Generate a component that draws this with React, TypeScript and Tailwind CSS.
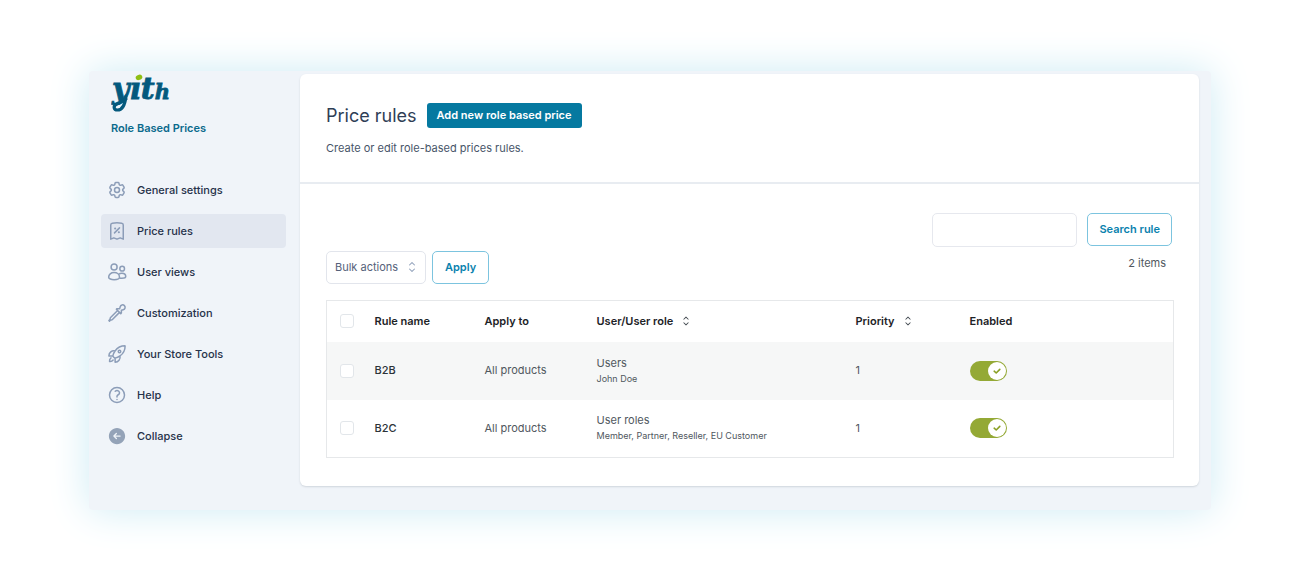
import type { ReactNode } from 'react'
import clsx from 'clsx'
import {
  HiArrowLeftCircle,
  HiChevronUpDown,
  HiOutlineCog6Tooth,
  HiOutlineEyeDropper,
  HiOutlineQuestionMarkCircle,
  HiOutlineReceiptPercent,
  HiOutlineRocketLaunch,
} from 'react-icons/hi2'

function UsersIcon({ className }: { className?: string }) {
  return (
    <svg viewBox="0 0 24 24" fill="none" stroke="currentColor" strokeLinejoin="round" className={className}>
      <circle cx="8.5" cy="6" r="3.6" />
      <circle cx="18.2" cy="8" r="2.8" />
      <path d="M2 18.400c0-3.500 2.800-5.700 6.500-5.700s6.500 2.200 6.500 5.700c0 1.800-3.200 2.800-6.500 2.800s-6.500-1-6.500-2.800Z" />
      <path d="M14.200 14.700c.9-.8 2.300-1.200 3.700-1.200 2.700 0 4.600 1.600 4.600 3.900 0 1.400-2 2.100-4.600 2.100-1.100 0-2.200-.1-3.100-.4" />
    </svg>
  )
}

const navItems = [
  { label: 'General settings', icon: HiOutlineCog6Tooth },
  { label: 'Price rules', icon: HiOutlineReceiptPercent, active: true },
  { label: 'User views', icon: UsersIcon },
  { label: 'Customization', icon: HiOutlineEyeDropper },
  { label: 'Your Store Tools', icon: HiOutlineRocketLaunch },
  { label: 'Help', icon: HiOutlineQuestionMarkCircle },
]

const rules = [
  { name: 'B2B', applyTo: 'All products', target: 'Users', detail: 'John Doe', priority: 1 },
  {
    name: 'B2C',
    applyTo: 'All products',
    target: 'User roles',
    detail: 'Member, Partner, Reseller, EU Customer',
    priority: 1,
  },
]

function Logo() {
  return (
    <svg
      width="70"
      height="48"
      viewBox="0 -8 70 48"
      role="img"
      aria-label="yith"
      fill="#04597d"
      className="-mt-2"
    >
      <text
        x="1"
        y="25"
        fontFamily="DejaVu Serif, serif"
        fontWeight="700"
        fontStyle="italic"
        fontSize="30"
        stroke="#04597d"
        strokeWidth="0.8"
      >
        yıt
        <tspan fontSize="21">h</tspan>
      </text>
      {/* looped tail under the first letter */}
      <path
        d="M15 22C14 31 11 36 6.500 36C2.500 36 2 32 5.500 30C8 28.600 11 28 15 25"
        fill="none"
        stroke="#04597d"
        strokeWidth="3.200"
        strokeLinecap="round"
      />
      <ellipse cx="28" cy="3.400" rx="3.400" ry="2.600" transform="rotate(-20 28 3.400)" fill="#8fbe13" />
    </svg>
  )
}

function Sidebar() {
  return (
    <aside className="w-[211px] shrink-0 pl-3 pr-3.5">
      <div className="pl-2.5">
        <Logo />
        <p className="mt-1.5 text-[11px] leading-4 font-semibold text-[#0b6a8c]">Role Based Prices</p>
      </div>
      <nav className="mt-[37px] flex flex-col gap-[7px]">
        {navItems.map(({ label, icon: Icon, active }) => (
          <a
            key={label}
            href="#"
            aria-current={active ? 'page' : undefined}
            className={clsx(
              'flex h-[34px] items-center gap-2.5 rounded px-1.5 text-[11px] font-medium text-[#26324a]',
              active && 'bg-[#e2e7f0]',
            )}
          >
            <Icon className="size-5 stroke-[1.8] text-[#8c9db8]" />
            {label}
          </a>
        ))}
        <button
          type="button"
          className="flex h-[34px] items-center gap-2.5 rounded px-1.5 text-[11px] font-medium text-[#26324a]"
        >
          <HiArrowLeftCircle className="size-5 text-[#94a3b8]" />
          Collapse
        </button>
      </nav>
    </aside>
  )
}

function Checkbox({ label }: { label: string }) {
  return (
    <input
      type="checkbox"
      aria-label={label}
      className="block size-3.5 appearance-none rounded-[3px] border border-[#e2e6ea] bg-white"
    />
  )
}

function Toggle({ label }: { label: string }) {
  return (
    <label className="relative block h-5 w-[37px]">
      <input
        type="checkbox"
        role="switch"
        defaultChecked
        aria-label={label}
        className="peer block h-full w-full appearance-none rounded-full bg-[#cbd5e1] checked:bg-[#94a935]"
      />
      <span className="pointer-events-none absolute top-px left-px flex size-[18px] items-center justify-center rounded-full bg-white peer-checked:left-[18px]">
        <svg
          viewBox="0 0 10 10"
          fill="none"
          stroke="currentColor"
          strokeLinecap="round"
          strokeLinejoin="round"
          className="size-2.5 stroke-[1.6] text-[#8aa024]"
        >
          <path d="M2.200 5.200 4.200 7 7.800 3.400" />
        </svg>
      </span>
    </label>
  )
}

function SortableHeader({ children }: { children: ReactNode }) {
  return (
    <button type="button" className="flex items-center gap-1.5 font-semibold">
      {children}
      <HiChevronUpDown className="size-3.5 text-[#3c434a]" />
    </button>
  )
}

function RulesTable() {
  return (
    <table className="w-full table-fixed border border-[#e6e8ea] text-left text-[11px] text-[#50575e]">
      <colgroup>
        <col className="w-12" />
        <col className="w-[110px]" />
        <col className="w-28" />
        <col className="w-[259px]" />
        <col className="w-[114px]" />
        <col />
      </colgroup>
      <thead>
        <tr className="h-[41px] text-[#1d2327]">
          <th className="pl-[13px]">
            <Checkbox label="Select all rules" />
          </th>
          <th className="font-semibold">Rule name</th>
          <th className="font-semibold">Apply to</th>
          <th>
            <SortableHeader>User/User role</SortableHeader>
          </th>
          <th>
            <SortableHeader>Priority</SortableHeader>
          </th>
          <th className="font-semibold">Enabled</th>
        </tr>
      </thead>
      <tbody>
        {rules.map((rule) => (
          <tr key={rule.name} className="h-[58px] odd:bg-[#f6f7f7]">
            <td className="pl-[13px]">
              <Checkbox label={`Select ${rule.name}`} />
            </td>
            <td className="font-medium text-[#2c3338]">{rule.name}</td>
            <td>{rule.applyTo}</td>
            <td>
              <div className="leading-4">{rule.target}</div>
              <div className="text-[9px] leading-4">{rule.detail}</div>
            </td>
            <td>{rule.priority}</td>
            <td>
              <Toggle label={`Enable ${rule.name}`} />
            </td>
          </tr>
        ))}
      </tbody>
    </table>
  )
}

export default function App() {
  return (
    <div className="min-h-screen bg-white px-[89px] py-[71px] font-[Inter,sans-serif]">
      <div className="flex rounded bg-[#f0f4f9] pt-[3px] pr-3 pb-6 shadow-[0_0_40px_#cdebf4]">
        <Sidebar />
        <main className="min-w-0 flex-1 rounded-md bg-white shadow-[0_1px_2px_#cfd5dc]">
          <header className="border-b-2 border-[#e8ecf1] px-[26px] pt-[29px] pb-[26px]">
            <div className="flex items-center gap-2.5">
              <h1 className="text-[18px] leading-6 text-[#2f3e56]">Price rules</h1>
              <button
                type="button"
                className="h-[25px] rounded-[3px] bg-[#0579a0] px-2.5 text-[11px] font-semibold text-white"
              >
                Add new role based price
              </button>
            </div>
            <p className="mt-3 text-[11px] leading-4 text-[#475569]">Create or edit role-based prices rules.</p>
          </header>

          <section className="pt-[29px] pr-[25px] pb-7 pl-[26px]">
            <div className="flex items-end justify-between pr-0.5">
              <div className="flex gap-1.5">
                <div className="relative">
                  <select
                    aria-label="Bulk actions"
                    className="h-[33px] w-[100px] appearance-none rounded-[5px] border border-[#e2e5ec] bg-white pl-2 text-[11px] text-[#55617a]"
                  >
                    <option>Bulk actions</option>
                  </select>
                  <HiChevronUpDown className="pointer-events-none absolute top-2 right-1.5 size-4 text-[#8c9db8]" />
                </div>
                <button
                  type="button"
                  className="h-[33px] rounded-[5px] border border-[#7cc4df] px-3 text-[11px] font-semibold text-[#0a82ae]"
                >
                  Apply
                </button>
              </div>
              <div className="flex flex-col items-end">
                <form className="flex gap-2.5" onSubmit={(e) => e.preventDefault()}>
                  <input
                    type="search"
                    aria-label="Search rules"
                    className="h-[34px] w-[145px] appearance-none rounded-[5px] border border-[#e6e8ee] px-2 text-[11px]"
                  />
                  <button
                    type="submit"
                    className="h-[33px] rounded-[5px] border border-[#7cc4df] px-[11px] text-[11px] font-semibold text-[#0a82ae]"
                  >
                    Search rule
                  </button>
                </form>
                <p className="mt-2 mb-[13px] pr-1.5 text-[11px] leading-4 text-[#50575e]">2 items</p>
              </div>
            </div>
            <div className="mt-4">
              <RulesTable />
            </div>
          </section>
        </main>
      </div>
    </div>
  )
}
